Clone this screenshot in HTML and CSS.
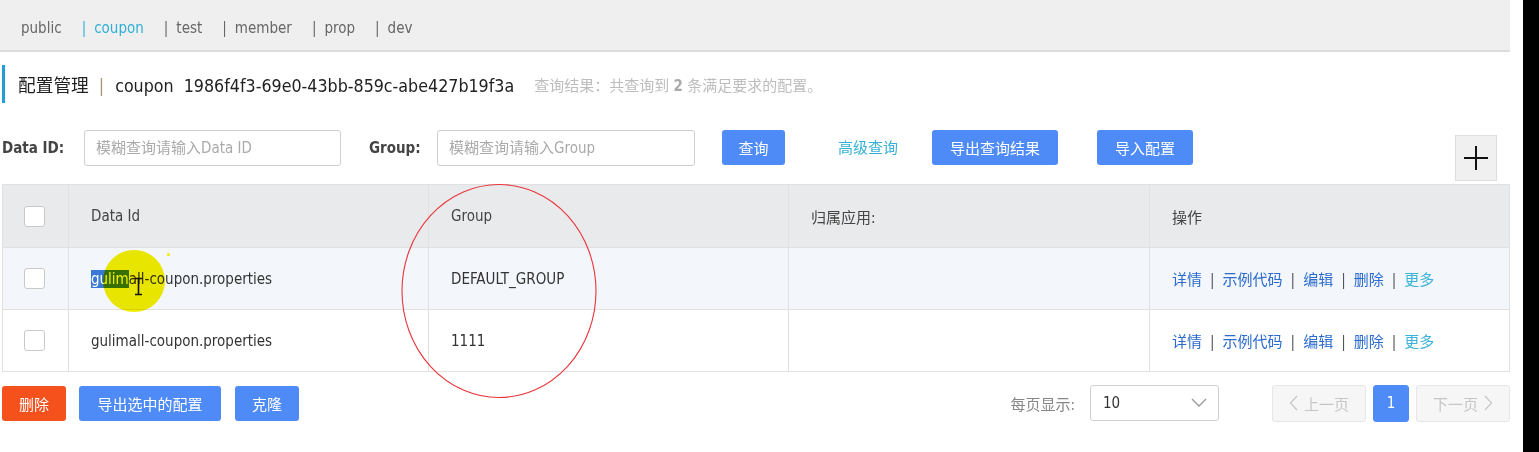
FILE: index.html
```html
<!DOCTYPE html>
<html lang="zh-CN">
<head>
<meta charset="utf-8">
<title>配置管理</title>
<link rel="stylesheet" href="styles.css">
</head>
<body>
<div class="page">
  <div class="main">
    <nav class="ns-bar">
      <span class="ns">public</span>
      <span class="ns active"><i class="bar">|</i>coupon</span>
      <span class="ns"><i class="bar">|</i>test</span>
      <span class="ns"><i class="bar">|</i>member</span>
      <span class="ns"><i class="bar">|</i>prop</span>
      <span class="ns"><i class="bar">|</i>dev</span>
    </nav>

    <div class="title-row">
      <span class="mark"></span>
      <h1 class="title">配置管理<span class="title-sep">|</span>coupon&nbsp;&nbsp;1986f4f3-69e0-43bb-859c-abe427b19f3a</h1>
      <span class="result">查询结果：共查询到 <b>2</b> 条满足要求的配置。</span>
    </div>

    <div class="form-row">
      <label class="lbl lbl-id">Data ID:</label>
      <div class="input input-id">模糊查询请输入Data ID</div>
      <label class="lbl lbl-group">Group:</label>
      <div class="input input-group">模糊查询请输入Group</div>
      <button class="btn btn-query">查询</button>
      <a class="adv-link">高级查询</a>
      <button class="btn btn-export">导出查询结果</button>
      <button class="btn btn-import">导入配置</button>
      <button class="plus-btn" aria-label="新建">
        <svg width="26" height="26" viewBox="0 0 26 26"><path d="M13 1v24M1 13h24" stroke="#111" stroke-width="2" fill="none"/></svg>
      </button>
    </div>

    <table class="cfg-table">
      <colgroup>
        <col class="c-check"><col class="c-col"><col class="c-col"><col class="c-app"><col class="c-col">
      </colgroup>
      <thead>
        <tr><th><span class="cb"></span></th><th>Data Id</th><th>Group</th><th>归属应用:</th><th>操作</th></tr>
      </thead>
      <tbody>
        <tr class="row-alt">
          <td><span class="cb"></span></td>
          <td><span class="sel">gulim</span>all-coupon.properties</td>
          <td>DEFAULT_GROUP</td>
          <td></td>
          <td class="ops"><a>详情</a><span class="osep">|</span><a>示例代码</a><span class="osep">|</span><a>编辑</a><span class="osep">|</span><a>删除</a><span class="osep">|</span><a class="more">更多</a></td>
        </tr>
        <tr>
          <td><span class="cb"></span></td>
          <td>gulimall-coupon.properties</td>
          <td>1111</td>
          <td></td>
          <td class="ops"><a>详情</a><span class="osep">|</span><a>示例代码</a><span class="osep">|</span><a>编辑</a><span class="osep">|</span><a>删除</a><span class="osep">|</span><a class="more">更多</a></td>
        </tr>
      </tbody>
    </table>

    <div class="bottom-row">
      <button class="btn btn-danger">删除</button>
      <button class="btn btn-export-sel">导出选中的配置</button>
      <button class="btn btn-clone">克隆</button>
      <div class="pager">
        <span class="pager-label">每页显示:</span>
        <div class="select">
          <span>10</span>
          <svg width="16" height="10" viewBox="0 0 16 10"><path d="M1 1l7 7 7-7" stroke="#999" stroke-width="1.3" fill="none"/></svg>
        </div>
        <button class="pg pg-prev"><svg class="chev" width="9" height="16" viewBox="0 0 9 16"><path d="M8 1L1.5 8 8 15" stroke="#c8c8c8" stroke-width="1.3" fill="none"/></svg>上一页</button>
        <button class="pg pg-cur">1</button>
        <button class="pg pg-next">下一页<svg class="chev" width="9" height="16" viewBox="0 0 9 16"><path d="M1 1l6.5 7L1 15" stroke="#c8c8c8" stroke-width="1.3" fill="none"/></svg></button>
      </div>
    </div>

    <div class="hl-circle"></div>
    <div class="hl-dot"></div>
    <svg class="ibeam" width="9" height="19" viewBox="0 0 9 19"><path d="M1 1.5h7M4.5 1.5v16M1 17.5h7" stroke="#111" stroke-width="1.6" fill="none"/></svg>
    <svg class="red-ring" width="196" height="216" viewBox="0 0 196 216"><ellipse cx="98" cy="108" rx="97" ry="106.5" stroke="#e8343a" stroke-width="1.1" fill="none"/></svg>
  </div>
  <div class="gutter"></div>
  <div class="stripe"></div>
</div>
</body>
</html>
```

FILE: styles.css
```css
* { box-sizing: border-box; }

html, body {
  margin: 0;
  padding: 0;
  background: #fff;
}

body {
  font-family: "DejaVu Sans Condensed", "Liberation Sans", "Noto Sans CJK SC", sans-serif;
  color: #333;
  overflow: hidden;
}

.page {
  display: flex;
  width: 1539px;
  height: 452px;
}

.main {
  position: relative;
  width: 1510px;
  flex: none;
}

.gutter {
  width: 13px;
  flex: none;
}

.stripe {
  width: 16px;
  flex: none;
  background: #000;
}

/* namespace bar */
.ns-bar {
  display: flex;
  align-items: center;
  gap: 20px;
  height: 52px;
  padding: 5px 0 0 21px;
  background: #efefef;
  border-bottom: 2px solid #dcdcdc;
  font-size: 15px;
  color: #666;
}

.ns .bar {
  font-style: normal;
  margin-right: 8px;
}

.ns.active {
  color: #2fb0d8;
}

/* title */
.title-row {
  display: flex;
  align-items: center;
  height: 38px;
  margin-top: 13px;
  padding-left: 2px;
}

.mark {
  width: 3px;
  height: 38px;
  background: #1f9ed8;
}

.title {
  margin: 0 0 0 13px;
  font-size: 17.7px;
  font-weight: normal;
  color: #222;
  white-space: nowrap;
}

.title-sep {
  margin: 0 11px 0 10px;
  color: #a8987a;
}

.result {
  margin-left: 20px;
  font-size: 15px;
  color: #bdbdbd;
}

.result b {
  color: #aaa;
}

/* search form */
.form-row {
  display: flex;
  align-items: flex-start;
  height: 51px;
  margin-top: 27px;
  padding-left: 2px;
}

.lbl {
  height: 36px;
  line-height: 37px;
  font-size: 15px;
  font-weight: bold;
  color: #444;
}

.lbl-id { width: 82px; }
.lbl-group { width: 68px; margin-left: 28px; }

.input {
  height: 36px;
  line-height: 35px;
  padding-left: 11px;
  border: 1px solid #cfcfcf;
  border-radius: 3px;
  font-size: 15px;
  color: #aaa;
}

.input-id { width: 257px; }
.input-group { width: 258px; }

.btn {
  height: 35px;
  padding: 0;
  border: none;
  border-radius: 3px;
  background: #4f8bf7;
  color: #fff;
  font-family: inherit;
  font-size: 15px;
  text-align: center;
}

.btn-query { width: 63px; margin-left: 27px; }

.adv-link {
  height: 36px;
  line-height: 36px;
  margin-left: 53px;
  font-size: 15px;
  color: #37b2d6;
}

.btn-export { width: 126px; margin-left: 34px; }
.btn-import { width: 96px; margin-left: 39px; }

.plus-btn {
  align-self: flex-end;
  display: flex;
  align-items: center;
  justify-content: center;
  width: 42px;
  height: 46px;
  margin-left: auto;
  margin-right: 13px;
  padding: 0;
  background: #f0f0f0;
  border: 1px solid #dedede;
}

/* table */
.cfg-table {
  width: 1507px;
  margin: 3px 0 0 2px;
  border-collapse: collapse;
  table-layout: fixed;
  border: 1px solid #e1e1e1;
  font-size: 15px;
}

.c-check { width: 66px; }
.c-col { width: 360px; }
.c-app { width: 361px; }

.cfg-table th,
.cfg-table td {
  padding: 0 0 0 22px;
  border: 1px solid #e1e1e1;
  text-align: left;
  white-space: nowrap;
}

.cfg-table th {
  height: 63px;
  background: #e9eaec;
  font-weight: normal;
  color: #444;
}

.cfg-table td {
  height: 62px;
  color: #333;
}

.cfg-table th:first-child,
.cfg-table td:first-child {
  padding-left: 21px;
}

.row-alt td {
  background: #f3f6fa;
}

.cb {
  display: block;
  width: 21px;
  height: 21px;
  border: 1px solid #c9c9c9;
  border-radius: 3px;
  background: #fff;
}

.sel {
  background: #3a78d6;
  color: #fff;
}

.ops a {
  color: #2a6bd0;
}

.ops a.more {
  color: #3cb3d8;
}

.osep {
  margin: 0 8px;
  color: #555;
}

/* bottom */
.bottom-row {
  display: flex;
  align-items: center;
  height: 36px;
  margin-top: 13px;
  padding-left: 2px;
}

.btn-danger { width: 64px; background: #f5511d; }
.btn-export-sel { width: 142px; margin-left: 13px; }
.btn-clone { width: 64px; margin-left: 14px; }

.pager {
  display: flex;
  align-items: center;
  margin-left: auto;
}

.pager-label {
  font-size: 15px;
  color: #888;
}

.select {
  display: flex;
  align-items: center;
  justify-content: space-between;
  width: 129px;
  height: 36px;
  margin-left: 15px;
  padding: 0 11px 0 12px;
  border: 1px solid #cfcfcf;
  border-radius: 3px;
  font-size: 15px;
  color: #333;
}

.pg {
  display: flex;
  align-items: center;
  justify-content: center;
  height: 37px;
  padding: 0;
  border: 1px solid #e6e6e6;
  border-radius: 3px;
  background: #f6f6f6;
  color: #c6c6c6;
  font-family: inherit;
  font-size: 15px;
}

.pg-prev { width: 94px; margin-left: 53px; }
.pg-next { width: 94px; margin-left: 7px; }

.pg-prev .chev { margin-right: 6px; }
.pg-next .chev { margin-left: 6px; }

.pg-cur {
  width: 36px;
  margin-left: 7px;
  border-color: #4f8bf7;
  background: #4f8bf7;
  color: #fff;
}

/* annotation overlays */
.hl-circle {
  position: absolute;
  left: 103px;
  top: 250px;
  width: 62px;
  height: 62px;
  border-radius: 50%;
  background: #f4ee00;
  mix-blend-mode: multiply;
}

.hl-dot {
  position: absolute;
  left: 167px;
  top: 253px;
  width: 3px;
  height: 3px;
  border-radius: 50%;
  background: #f2ea00;
}

.ibeam {
  position: absolute;
  left: 134px;
  top: 277px;
}

.red-ring {
  position: absolute;
  left: 401px;
  top: 183px;
}
```
